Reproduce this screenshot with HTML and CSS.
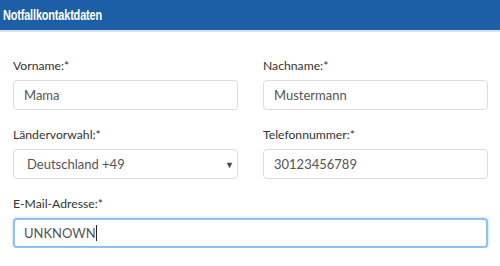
FILE: index.html
```html
<!DOCTYPE html>
<html lang="de">
<head>
<meta charset="utf-8">
<title>Notfallkontaktdaten</title>
<link rel="stylesheet" href="styles.css">
</head>
<body>
<section class="panel">
  <header class="panel-head"><h2 class="panel-title">Notfallkontaktdaten</h2></header>
  <div class="panel-body">
    <div class="field">
      <label class="label">Vorname:*</label>
      <input class="control" type="text" value="Mama">
    </div>
    <div class="field">
      <label class="label">Nachname:*</label>
      <input class="control" type="text" value="Mustermann">
    </div>
    <div class="field">
      <label class="label">Ländervorwahl:*</label>
      <div class="control select">
        <span>Deutschland +49</span>
        <span class="arrow">▼</span>
      </div>
    </div>
    <div class="field">
      <label class="label">Telefonnummer:*</label>
      <input class="control" type="text" value="30123456789">
    </div>
    <div class="field wide">
      <label class="label">E-Mail-Adresse:*</label>
      <div class="control focused"><span>UNKNOWN</span><span class="caret"></span></div>
    </div>
  </div>
</section>
</body>
</html>
```
FILE: styles.css
```css
* { box-sizing: border-box; }
html, body { margin: 0; padding: 0; background: #fff; }
body { font-family: Lato, "Open Sans", sans-serif; color: #333; }

.panel-head {
  height: 32px;
  background: #1c5fa6;
  border-bottom: 2px solid #d6e4f2;
  display: flex;
  align-items: center;
  padding: 0 0 1px 3px;
}
.panel-title {
  margin: 0;
  font-family: "Liberation Sans", Arial, sans-serif;
  font-weight: bold;
  font-size: 14px;
  color: #fff;
  letter-spacing: -0.2px;
  transform: scaleX(0.78);
  transform-origin: left center;
  white-space: nowrap;
}

.panel-body {
  display: grid;
  grid-template-columns: 1fr 1fr;
  column-gap: 25px;
  row-gap: 17px;
  padding: 26px 12px 0 13px;
}
.field { display: flex; flex-direction: column; }
.field.wide { grid-column: 1 / -1; }
.label {
  font-size: 12.2px;
  line-height: 16px;
  margin-bottom: 6px;
  color: #333;
}
.control {
  height: 30px;
  border: 1px solid #dcdcdc;
  border-radius: 4px;
  padding: 0 10px;
  font-family: Lato, "Open Sans", sans-serif;
  font-size: 13px;
  color: #555;
  background: #fff;
  display: flex;
  align-items: center;
}
input.control { display: block; outline: none; }
.select { justify-content: space-between; padding-left: 13px; padding-right: 3px; }
.arrow { font-size: 9px; color: #444; }
.focused {
  border: 2px solid #8fc1f3;
  box-shadow: 0 0 3px rgba(102, 175, 233, 0.6);
  padding-left: 9px;
}
.caret {
  display: inline-block;
  width: 1px;
  height: 16px;
  background: #222;
}
```
